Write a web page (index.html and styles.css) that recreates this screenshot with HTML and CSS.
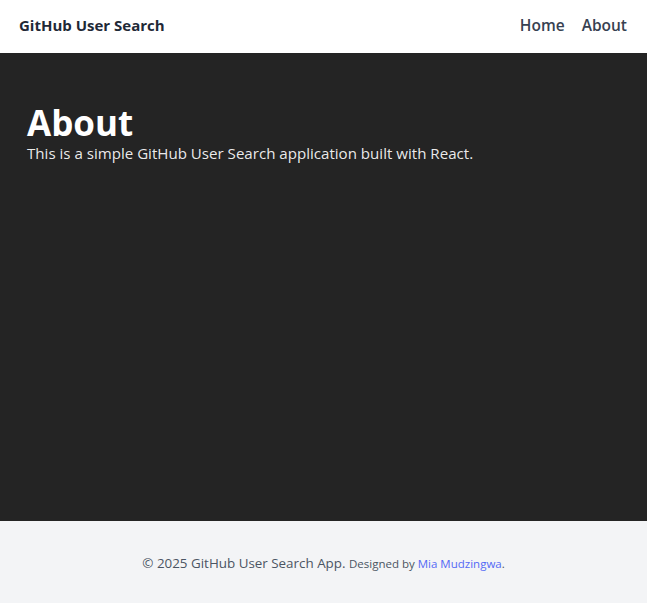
FILE: index.html
```html
<!DOCTYPE html>
<html>
<head>
<meta charset="utf-8">
<link rel="stylesheet" href="styles.css">
</head>
<body>
<div class="app">
  <header class="navbar">
    <span class="brand">GitHub User Search</span>
    <nav class="links">
      <a href="#">Home</a>
      <a href="#">About</a>
    </nav>
  </header>
  <main class="content">
    <h1>About</h1>
    <p>This is a simple GitHub User Search application built with React.</p>
  </main>
  <footer class="footer">
    <p>© 2025 GitHub User Search App. <span class="small">Designed by <a href="#">Mia Mudzingwa</a>.</span></p>
  </footer>
</div>
</body>
</html>
```
FILE: styles.css
```css
* { box-sizing: border-box; }
html, body { margin: 0; padding: 0; }
body {
  font-family: "Open Sans", "Noto Sans", sans-serif;
  background: #242424;
}
.app {
  display: flex;
  flex-direction: column;
  min-height: 603px;
}
.navbar {
  height: 53px;
  background: #ffffff;
  display: flex;
  align-items: center;
  justify-content: space-between;
  padding: 0 20px 4px 19px;
}
.brand {
  font-size: 15px;
  font-weight: 700;
  color: #1f2937;
}
.links {
  display: flex;
  gap: 17px;
}
.links a {
  font-size: 15.5px;
  font-weight: 600;
  color: #374151;
  text-decoration: none;
}
.content {
  flex: 1;
  background: #242424;
  color: #ffffff;
  padding: 52px 27px 40px;
}
.content h1 {
  margin: 0;
  font-size: 35px;
  line-height: 36px;
  font-weight: 700;
}
.content p {
  margin: 0;
  font-size: 15.1px;
  line-height: 24px;
  color: rgba(255,255,255,0.92);
}
.footer {
  height: 82px;
  background: #f3f4f6;
  display: flex;
  align-items: center;
  justify-content: center;
  padding-top: 2px;
}
.footer p {
  margin: 0;
  font-size: 13.4px;
  color: #4b5563;
}
.footer .small { font-size: 11.5px; }
.footer a { color: #5469f5; text-decoration: none; }
```
